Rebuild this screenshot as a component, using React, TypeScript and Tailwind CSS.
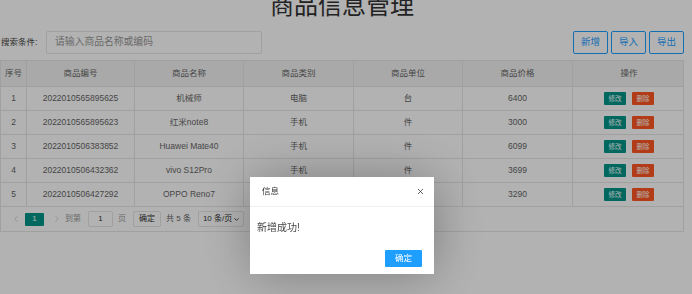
import { X, ChevronLeft, ChevronRight, ChevronDown } from 'lucide-react'

const rows = [
  { id: 1, code: '2022010565895625', name: '机械师', type: '电脑', unit: '台', price: '6400' },
  { id: 2, code: '2022010565895623', name: '红米note8', type: '手机', unit: '件', price: '3000' },
  { id: 3, code: '2022010506383852', name: 'Huawei Mate40', type: '手机', unit: '件', price: '6099' },
  { id: 4, code: '2022010506432362', name: 'vivo S12Pro', type: '手机', unit: '件', price: '3699' },
  { id: 5, code: '2022010506427292', name: 'OPPO Reno7', type: '手机', unit: '件', price: '3290' },
]

const cols = 'grid grid-cols-[26px_108px_109px_110px_109px_110px_112px]'
const cell = 'flex items-center justify-center border-r border-[#e6e6e6] last:border-r-0'

export default function App() {
  return (
    <div className="relative h-[294px] w-[692px] overflow-hidden bg-white pr-[8px] font-['Liberation_Sans','Noto_Sans_CJK_SC',sans-serif] text-[#666]">
      <h1 className="-mt-[6px] text-center text-[24px] leading-[24px] text-[#333]">商品信息管理</h1>

      <div className="mt-[13px] flex h-[23px] items-center justify-between">
        <div className="flex items-center">
          <span className="w-[46px] pl-[1px] text-[8.5px] text-[#444]">搜索条件:</span>
          <div className="flex h-[23px] w-[216px] items-center rounded-[2px] border border-[#e6e6e6] pl-[8px] text-[9.8px] text-[#999]">
            请输入商品名称或编码
          </div>
        </div>
        <div className="flex gap-[3px]">
          {['新增', '导入', '导出'].map((t) => (
            <button
              key={t}
              className="flex h-[23px] w-[35px] items-center justify-center rounded-[2px] border border-[#1E9FFF] text-[9.5px] text-[#1E9FFF]"
            >
              {t}
            </button>
          ))}
        </div>
      </div>

      <div className="mt-[6px] border border-[#e6e6e6] text-[8.5px]">
        <div className={`${cols} h-[25px] bg-[#f2f2f2]`}>
          {['序号', '商品编号', '商品名称', '商品类别', '商品单位', '商品价格', '操作'].map((h) => (
            <div key={h} className={cell}>
              {h}
            </div>
          ))}
        </div>
        {rows.map((r) => (
          <div key={r.id} className={`${cols} h-[24px] border-t border-[#e6e6e6]`}>
            <div className={cell}>{r.id}</div>
            <div className={cell}>{r.code}</div>
            <div className={cell}>{r.name}</div>
            <div className={cell}>{r.type}</div>
            <div className={cell}>{r.unit}</div>
            <div className={cell}>{r.price}</div>
            <div className={`${cell} gap-[6px]`}>
              <span className="flex h-[13px] w-[22px] items-center justify-center rounded-[1px] bg-[#009688] text-[6.5px] text-white">
                修改
              </span>
              <span className="flex h-[13px] w-[22px] items-center justify-center rounded-[1px] bg-[#FF5722] text-[6.5px] text-white">
                删除
              </span>
            </div>
          </div>
        ))}

        <div className="flex h-[25px] items-center whitespace-nowrap border-t border-[#e6e6e6] pl-[10px] text-[8px] text-[#666]">
          <ChevronLeft className="h-[10px] w-[10px] text-[#bbb]" strokeWidth={1.5} />
          <span className="ml-[4px] flex h-[13px] w-[19px] items-center justify-center rounded-[1px] bg-[#009688] text-white">
            1
          </span>
          <ChevronRight className="ml-[8px] h-[10px] w-[10px] text-[#bbb]" strokeWidth={1.5} />
          <span className="ml-[3px] text-[#999]">到第</span>
          <span className="ml-[7px] flex h-[16px] w-[25px] items-center justify-center rounded-[2px] border border-[#e6e6e6] text-[#333]">
            1
          </span>
          <span className="ml-[5px] text-[#999]">页</span>
          <span className="ml-[7px] flex h-[16px] w-[28px] items-center justify-center rounded-[2px] border border-[#e6e6e6] text-[#333]">
            确定
          </span>
          <span className="ml-[5px]">共 5 条</span>
          <span className="ml-[7px] flex h-[16px] w-[46px] shrink-0 items-center justify-between rounded-[2px] border border-[#e6e6e6] pl-[4px] pr-[3px] text-[#333]">
            <span className="whitespace-nowrap">10 条/页</span>
            <ChevronDown className="h-[7px] w-[7px] shrink-0" strokeWidth={3} />
          </span>
        </div>
      </div>

      <div className="fixed inset-0 bg-black/30" />

      <div className="fixed left-[250px] top-[177px] flex h-[97px] w-[184px] flex-col bg-white shadow-[1px_1px_50px_rgba(0,0,0,0.3)]">
        <div className="flex h-[30px] items-center justify-between border-b border-[#f0f0f0] pl-[12px] pr-[9px] text-[8.5px] text-[#333]">
          信息
          <X className="h-[9px] w-[9px] text-[#333]" strokeWidth={2} />
        </div>
        <div className="pl-[7px] pt-[13px] text-[10px] text-[#444]">新增成功!</div>
        <div className="mt-auto flex justify-end pb-[7px] pr-[12px]">
          <span className="flex h-[17px] w-[37px] items-center justify-center rounded-[1px] bg-[#1E9FFF] text-[8.5px] text-white">
            确定
          </span>
        </div>
      </div>
    </div>
  )
}
